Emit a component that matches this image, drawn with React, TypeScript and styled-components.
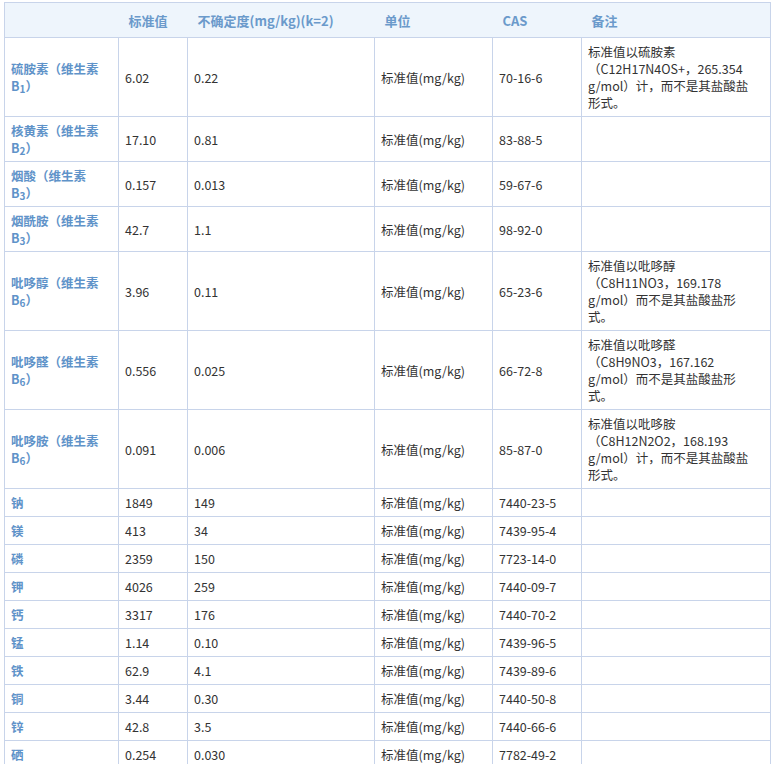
import React from 'react'
import styled, { createGlobalStyle } from 'styled-components'

const GlobalStyle = createGlobalStyle`
  body {
    margin: 0;
    padding: 2px 0 0 4px;
    background: #fff;
    font-family: "Microsoft YaHei", "Noto Sans CJK SC", sans-serif;
  }
`

const Table = styled.table`
  width: 766px;
  border-collapse: collapse;
  table-layout: fixed;
  font-size: 12.5px;
  line-height: 17px;
  color: #333;
`

const Th = styled.th`
  background: #eef5fc;
  color: #6b9acb;
  font-weight: bold;
  text-align: left;
  height: 34px;
  padding: 0 6px 0 10px;
  font-size: 13px;
  border-top: 1px solid #c8d4ea;
`

const Td = styled.td<{ $head?: boolean }>`
  border: 1px solid #c8d4ea;
  padding: 5px 6px;
  height: 17px;
  vertical-align: middle;
  white-space: nowrap;
  color: ${(p) => (p.$head ? '#5f93c9' : '#333')};
  font-weight: ${(p) => (p.$head ? 'bold' : 'normal')};
`

const Sub = styled.sub`
  font-size: 10px;
  line-height: 0;
  vertical-align: -2px;
`

const HeadRow = styled.tr`
  border-left: 1px solid #c8d4ea;
  border-right: 1px solid #c8d4ea;
`

type Row = { name: React.ReactNode; v: string; u: string; cas: string; note?: string[] }

const vit = (n: string, sub: string) => (
  <>
    {n}（维生素
    <br />
    B<Sub>{sub}</Sub>）
  </>
)

const rows: Row[] = [
  { name: vit('硫胺素', '1'), v: '6.02', u: '0.22', cas: '70-16-6', note: ['标准值以硫胺素', '（C12H17N4OS+，265.354', 'g/mol）计，而不是其盐酸盐', '形式。'] },
  { name: vit('核黄素', '2'), v: '17.10', u: '0.81', cas: '83-88-5' },
  { name: vit('烟酸', '3'), v: '0.157', u: '0.013', cas: '59-67-6' },
  { name: vit('烟酰胺', '3'), v: '42.7', u: '1.1', cas: '98-92-0' },
  { name: vit('吡哆醇', '6'), v: '3.96', u: '0.11', cas: '65-23-6', note: ['标准值以吡哆醇', '（C8H11NO3，169.178', 'g/mol）而不是其盐酸盐形', '式。'] },
  { name: vit('吡哆醛', '6'), v: '0.556', u: '0.025', cas: '66-72-8', note: ['标准值以吡哆醛', '（C8H9NO3，167.162', 'g/mol）而不是其盐酸盐形', '式。'] },
  { name: vit('吡哆胺', '6'), v: '0.091', u: '0.006', cas: '85-87-0', note: ['标准值以吡哆胺', '（C8H12N2O2，168.193', 'g/mol）计，而不是其盐酸盐', '形式。'] },
  { name: '钠', v: '1849', u: '149', cas: '7440-23-5' },
  { name: '镁', v: '413', u: '34', cas: '7439-95-4' },
  { name: '磷', v: '2359', u: '150', cas: '7723-14-0' },
  { name: '钾', v: '4026', u: '259', cas: '7440-09-7' },
  { name: '钙', v: '3317', u: '176', cas: '7440-70-2' },
  { name: '锰', v: '1.14', u: '0.10', cas: '7439-96-5' },
  { name: '铁', v: '62.9', u: '4.1', cas: '7439-89-6' },
  { name: '铜', v: '3.44', u: '0.30', cas: '7440-50-8' },
  { name: '锌', v: '42.8', u: '3.5', cas: '7440-66-6' },
  { name: '硒', v: '0.254', u: '0.030', cas: '7782-49-2' },
]

export default function App() {
  return (
    <>
      <GlobalStyle />
      <Table>
        <colgroup>
          <col style={{ width: 114 }} />
          <col style={{ width: 69 }} />
          <col style={{ width: 187 }} />
          <col style={{ width: 118 }} />
          <col style={{ width: 89 }} />
          <col style={{ width: 189 }} />
        </colgroup>
        <thead>
          <HeadRow>
            <Th />
            <Th>标准值</Th>
            <Th>不确定度(mg/kg)(k=2)</Th>
            <Th>单位</Th>
            <Th>CAS</Th>
            <Th>备注</Th>
          </HeadRow>
        </thead>
        <tbody>
          {rows.map((r, i) => (
            <tr key={i}>
              <Td $head>{r.name}</Td>
              <Td>{r.v}</Td>
              <Td>{r.u}</Td>
              <Td>标准值(mg/kg)</Td>
              <Td>{r.cas}</Td>
              <Td>
                {r.note?.map((l, j) => (
                  <React.Fragment key={j}>
                    {j > 0 && <br />}
                    {l}
                  </React.Fragment>
                ))}
              </Td>
            </tr>
          ))}
        </tbody>
      </Table>
    </>
  )
}
